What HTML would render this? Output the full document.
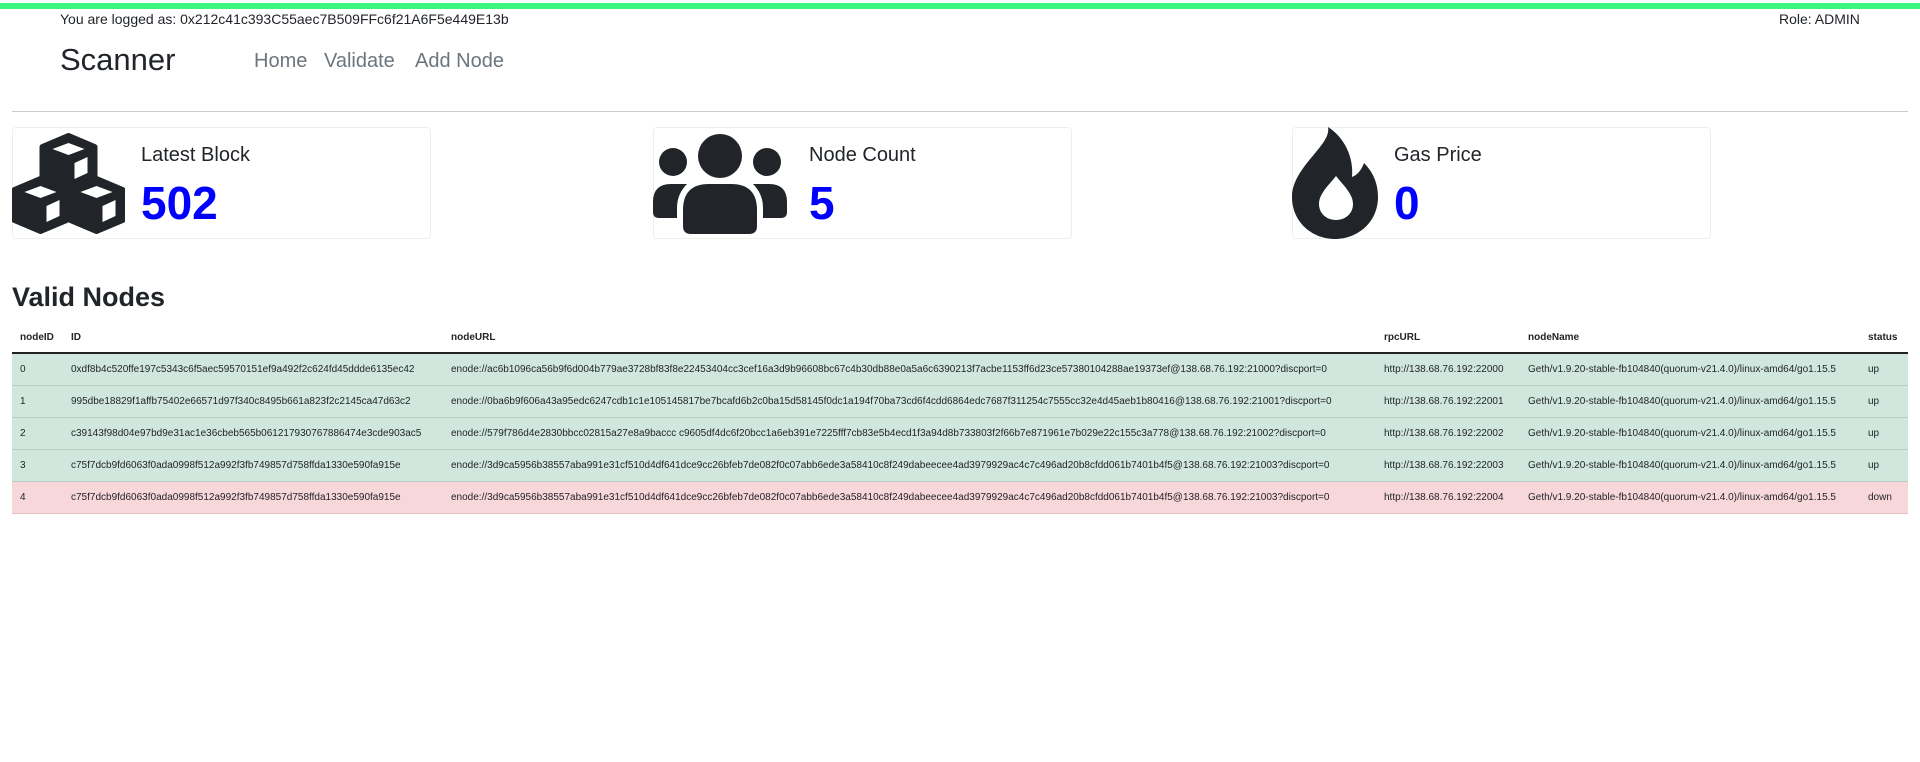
<!DOCTYPE html>
<html><head><meta charset="utf-8"><style>
*{margin:0;padding:0;box-sizing:border-box}
body{width:1920px;height:762px;background:#fff;font-family:"Liberation Sans",sans-serif;color:#212529;position:relative;overflow:hidden}
.abs{position:absolute;white-space:nowrap}
.bar{position:absolute;left:0;top:3px;width:1920px;height:6px;background:#3cf57f}
.card{position:absolute;top:127px;height:112px;width:419px;border:1px solid #eee;border-radius:4px}
.ttl{position:absolute;font-size:20px;font-weight:500;top:144px}
.num{position:absolute;font-size:46px;color:#0000ff;top:176px;font-weight:bold}
table{position:absolute;left:12px;top:322px;width:1896px;border-collapse:collapse;table-layout:fixed;font-size:10px}
th{font-weight:bold;text-align:left;height:31px;border-bottom:2px solid #222;padding-left:8px;white-space:nowrap}
td{height:32px;padding-left:8px;white-space:nowrap;overflow:hidden;border-bottom:1px solid #bccfc6}
tr.g td{background:#d1e7dd}
tr.r td{background:#f8d7da;border-bottom-color:#e6c2c5}
</style></head><body>
<div class="bar"></div>
<div class="abs" style="left:60px;top:11px;font-size:14px">You are logged as: 0x212c41c393C55aec7B509FFc6f21A6F5e449E13b</div>
<div class="abs" style="left:1779px;top:11px;font-size:14px">Role: ADMIN</div>
<div class="abs" style="left:60px;top:42px;font-size:31px;font-weight:500">Scanner</div>
<div class="abs" style="left:254px;top:50px;font-size:20px;color:#6c757d">Home</div>
<div class="abs" style="left:324px;top:50px;font-size:20px;color:#6c757d">Validate</div>
<div class="abs" style="left:415px;top:50px;font-size:20px;color:#6c757d">Add Node</div>
<div class="abs" style="left:12px;top:111px;width:1896px;height:1px;background:#ccc"></div>

<div class="card" style="left:12px"></div>
<div class="card" style="left:653px"></div>
<div class="card" style="left:1292px"></div>

<svg class="abs" style="left:12px;top:133px" width="113" height="101" viewBox="0 0 112 101">
<g fill="#212529" stroke="#212529" stroke-width="6" stroke-linejoin="round">
<polygon points="56,3 82,14 82,44 56,55 30,44 30,14"/>
<polygon points="28,46 54,57 54,87 28,98 2,87 2,57"/>
<polygon points="84,46 110,57 110,87 84,98 58,87 58,57"/>
</g>
<g fill="#fff">
<polygon points="56,10 72,16 56,22 40,16"/><polygon points="62,30 75,24 75,40 62,46"/>
<polygon points="28,53 44,59 28,65 12,59"/><polygon points="34,73 47,67 47,83 34,89"/>
<polygon points="84,53 100,59 84,65 68,59"/><polygon points="90,73 103,67 103,83 90,89"/>
</g>
</svg>
<div class="ttl" style="left:141px">Latest Block</div>
<div class="num" style="left:141px">502</div>

<svg class="abs" style="left:653px;top:132px" width="134" height="102" viewBox="0 0 134 102">
<g fill="#212529">
<circle cx="67" cy="24" r="22"/>
<path d="M30 94 V78 Q30 52 56 52 H78 Q104 52 104 78 V94 Q104 102 96 102 H38 Q30 102 30 94Z"/>
<circle cx="20" cy="30" r="14"/><circle cx="114" cy="30" r="14"/>
<path d="M0 80 V70 Q0 52 18 52 H34 Q24 62 24 76 V86 H6 Q0 86 0 80Z"/>
<path d="M134 80 V70 Q134 52 116 52 H100 Q110 62 110 76 V86 H128 Q134 86 134 80Z"/>
</g></svg>
<div class="ttl" style="left:809px">Node Count</div>
<div class="num" style="left:809px">5</div>

<svg class="abs" style="left:1292px;top:127px" width="86" height="112" viewBox="0 0 86 112">
<path fill="#212529" d="M36 0 C40 18 0 40 0 70 C0 95 20 112 43 112 C66 112 86 95 86 70 C86 55 80 44 72 36 C69 44 65 48 60 50 C62 30 52 10 36 0 Z"/>
<path fill="#fff" d="M44 93 C34 93 27 86 27 77 C27 67 36 59 44 49 C52 59 61 67 61 77 C61 86 54 93 44 93 Z"/>
</svg>
<div class="ttl" style="left:1394px">Gas Price</div>
<div class="num" style="left:1394px">0</div>

<div class="abs" style="left:12px;top:282px;font-size:27px;font-weight:bold">Valid Nodes</div>

<table>
<colgroup><col style="width:51px"><col style="width:380px"><col style="width:933px"><col style="width:144px"><col style="width:340px"><col></colgroup>
<tr><th>nodeID</th><th>ID</th><th>nodeURL</th><th>rpcURL</th><th>nodeName</th><th>status</th></tr>
<tr class="g"><td>0</td><td>0xdf8b4c520ffe197c5343c6f5aec59570151ef9a492f2c624fd45ddde6135ec42</td><td>enode://ac6b1096ca56b9f6d004b779ae3728bf83f8e22453404cc3cef16a3d9b96608bc67c4b30db88e0a5a6c6390213f7acbe1153ff6d23ce57380104288ae19373ef@138.68.76.192:21000?discport=0</td><td>http://138.68.76.192:22000</td><td>Geth/v1.9.20-stable-fb104840(quorum-v21.4.0)/linux-amd64/go1.15.5</td><td>up</td></tr>
<tr class="g"><td>1</td><td>995dbe18829f1affb75402e66571d97f340c8495b661a823f2c2145ca47d63c2</td><td>enode://0ba6b9f606a43a95edc6247cdb1c1e105145817be7bcafd6b2c0ba15d58145f0dc1a194f70ba73cd6f4cdd6864edc7687f311254c7555cc32e4d45aeb1b80416@138.68.76.192:21001?discport=0</td><td>http://138.68.76.192:22001</td><td>Geth/v1.9.20-stable-fb104840(quorum-v21.4.0)/linux-amd64/go1.15.5</td><td>up</td></tr>
<tr class="g"><td>2</td><td>c39143f98d04e97bd9e31ac1e36cbeb565b061217930767886474e3cde903ac5</td><td>enode://579f786d4e2830bbcc02815a27e8a9baccc c9605df4dc6f20bcc1a6eb391e7225fff7cb83e5b4ecd1f3a94d8b733803f2f66b7e871961e7b029e22c155c3a778@138.68.76.192:21002?discport=0</td><td>http://138.68.76.192:22002</td><td>Geth/v1.9.20-stable-fb104840(quorum-v21.4.0)/linux-amd64/go1.15.5</td><td>up</td></tr>
<tr class="g"><td>3</td><td>c75f7dcb9fd6063f0ada0998f512a992f3fb749857d758ffda1330e590fa915e</td><td>enode://3d9ca5956b38557aba991e31cf510d4df641dce9cc26bfeb7de082f0c07abb6ede3a58410c8f249dabeecee4ad3979929ac4c7c496ad20b8cfdd061b7401b4f5@138.68.76.192:21003?discport=0</td><td>http://138.68.76.192:22003</td><td>Geth/v1.9.20-stable-fb104840(quorum-v21.4.0)/linux-amd64/go1.15.5</td><td>up</td></tr>
<tr class="r"><td>4</td><td>c75f7dcb9fd6063f0ada0998f512a992f3fb749857d758ffda1330e590fa915e</td><td>enode://3d9ca5956b38557aba991e31cf510d4df641dce9cc26bfeb7de082f0c07abb6ede3a58410c8f249dabeecee4ad3979929ac4c7c496ad20b8cfdd061b7401b4f5@138.68.76.192:21003?discport=0</td><td>http://138.68.76.192:22004</td><td>Geth/v1.9.20-stable-fb104840(quorum-v21.4.0)/linux-amd64/go1.15.5</td><td>down</td></tr>
</table>
</body></html>
